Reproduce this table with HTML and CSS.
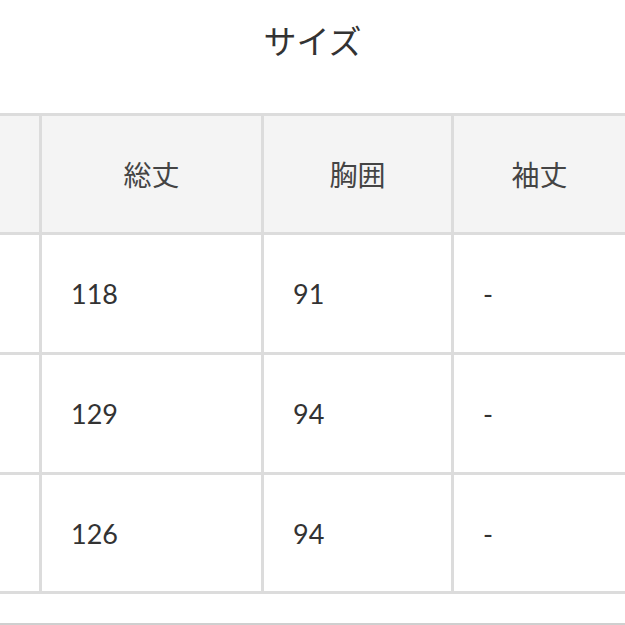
FILE: index.html
```html
<!DOCTYPE html>
<html lang="ja">
<head>
<meta charset="utf-8">
<link rel="stylesheet" href="styles.css">
</head>
<body>
<h1 class="title">サイズ</h1>
<div class="size-table">
  <div class="cell head"></div>
  <div class="cell head">総丈</div>
  <div class="cell head">胸囲</div>
  <div class="cell head">袖丈</div>

  <div class="cell"></div>
  <div class="cell">118</div>
  <div class="cell">91</div>
  <div class="cell">-</div>

  <div class="cell"></div>
  <div class="cell">129</div>
  <div class="cell">94</div>
  <div class="cell">-</div>

  <div class="cell"></div>
  <div class="cell">126</div>
  <div class="cell">94</div>
  <div class="cell">-</div>
</div>
<div class="footer-line"></div>
</body>
</html>
```
FILE: styles.css
```css
html, body {
  margin: 0;
  padding: 0;
  background: #ffffff;
}
body {
  width: 625px;
  height: 625px;
  overflow: hidden;
  font-family: Lato, "Noto Sans CJK JP", sans-serif;
  color: #333333;
}
.title {
  margin: 0 0 48px;
  padding-top: 15px;
  font-family: "Noto Sans CJK JP", sans-serif;
  font-weight: 400;
  font-size: 33px;
  line-height: 50px;
  text-align: center;
  color: #333333;
}
.size-table {
  display: grid;
  grid-template-columns: 39px 219px 187px 171px;
  grid-template-rows: 116px 117px 117px 116px;
  gap: 3px;
  padding: 3px 0;
  background: #dcdcdc;
}
.cell {
  background: #ffffff;
  display: flex;
  align-items: center;
  padding-left: 29px;
  font-size: 27px;
  color: #333333;
}
.cell.head {
  background: #f4f4f4;
  justify-content: center;
  padding-left: 0;
  font-family: "Noto Sans CJK JP", sans-serif;
  font-size: 28px;
  color: #444444;
}
.footer-line {
  margin-top: 29px;
  height: 2px;
  background: #cfcfcf;
}
```
